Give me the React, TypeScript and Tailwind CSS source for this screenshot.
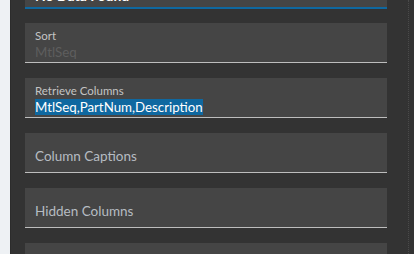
import React from "react";

type Field = { label: string; value?: string; placeholder?: string; selected?: boolean };

const fields: Field[] = [
  { label: "Sort", placeholder: "MtlSeq" },
  { label: "Retrieve Columns", value: "MtlSeq,PartNum,Description", selected: true },
  { label: "Column Captions" },
  { label: "Hidden Columns" },
  { label: "" },
];

const FieldBox: React.FC<{ f: Field }> = ({ f }) => {
  const stacked = f.value !== undefined || f.placeholder !== undefined;
  return (
    <div className="h-[40px] shrink-0 bg-[#454545] border-b border-[#bdbdbd] pl-[10px]">
      {stacked ? (
        <div className="pt-[6px]">
          <div className="text-[11.5px] leading-[14px] text-[#c4c4c4]">{f.label}</div>
          <div className="text-[13.3px] leading-[18px]">
            {f.selected ? (
              <span className="bg-[#0f68a0] text-white">{f.value}</span>
            ) : (
              <span className="text-[#5e5e5e]">{f.placeholder}</span>
            )}
          </div>
        </div>
      ) : (
        <div className="pt-[14px] text-[13.5px] leading-[18px] text-[#b6bcc2]">{f.label}</div>
      )}
    </div>
  );
};

export default function App() {
  return (
    <div
      className="flex h-[254px] w-[414px] overflow-hidden bg-[#eef1f4]"
      style={{ fontFamily: "Lato, 'Noto Sans', sans-serif" }}
    >
      <div className="w-[10px] shrink-0" />
      <div className="flex flex-1 bg-[#333333] border-l border-[#2c2c2c]">
        <div className="flex w-[376px] shrink-0 flex-col pl-[14px]">
          <div className="-mt-[32px] mb-[14px] h-[41px] shrink-0 bg-[#454545] border-b-2 border-[#0f68a0] pl-[10px] pt-[19px]">
            <div className="text-[14px] leading-[18px] font-bold text-white">No Data Found</div>
          </div>
          <div className="flex flex-col gap-[15px]">
            {fields.map((f, i) => (
              <FieldBox key={i} f={f} />
            ))}
          </div>
        </div>
        <div className="ml-[21px] h-full border-l border-dotted border-[#4a4a4a]" />
      </div>
    </div>
  );
}
